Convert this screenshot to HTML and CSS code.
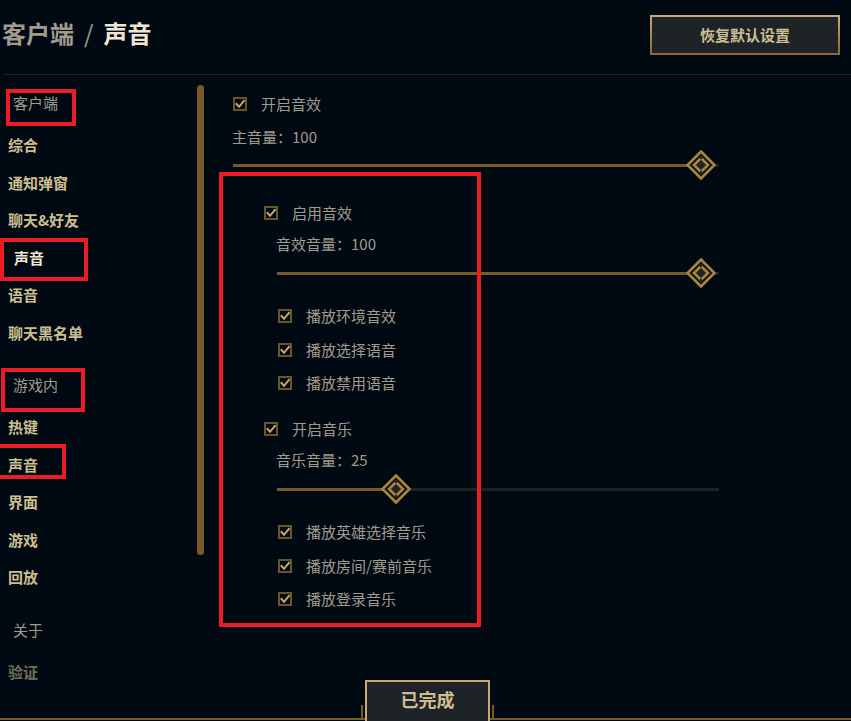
FILE: index.html
```html
<!DOCTYPE html>
<html lang="zh-CN">
<head>
<meta charset="utf-8">
<title>客户端 / 声音</title>
<link rel="stylesheet" href="styles.css">
</head>
<body>
<div class="page">
  <header class="topbar">
    <h1 class="title"><span class="crumb">客户端</span><span class="sep">/</span><span class="current">声音</span></h1>
    <button class="btn-reset">恢复默认设置</button>
  </header>

  <div class="main">
    <nav class="sidebar">
      <div class="nav-head first">客户端</div>
      <div class="nav-item">综合</div>
      <div class="nav-item">通知弹窗</div>
      <div class="nav-item">聊天&amp;好友</div>
      <div class="nav-item active">声音</div>
      <div class="nav-item">语音</div>
      <div class="nav-item">聊天黑名单</div>
      <div class="nav-head">游戏内</div>
      <div class="nav-item">热键</div>
      <div class="nav-item">声音</div>
      <div class="nav-item">界面</div>
      <div class="nav-item">游戏</div>
      <div class="nav-item">回放</div>
      <div class="nav-head">关于</div>
      <div class="nav-item faded">验证</div>
    </nav>
    <div class="scrollbar"></div>

    <section class="content">
      <label class="check">
        <svg viewBox="0 0 14 14"><rect x="1" y="1" width="12" height="12" class="cb-box"/><path d="M3.5 7 L6 9.8 L11 3.8" class="cb-tick"/></svg>
        <span>开启音效</span>
      </label>
      <div class="vol-label">主音量：100</div>
      <div class="slider slider-wide">
        <div class="track"><div class="fill" style="width:468px"></div></div>
        <svg class="thumb" style="left:453px" viewBox="0 0 30 30"><polygon points="15,1.5 28.5,15 15,28.5 1.5,15" class="th-out"/><polygon points="15,8 22,15 15,22 8,15" class="th-in"/><circle cx="15" cy="8" r="1.3" class="th-dot"/><circle cx="15" cy="22" r="1.3" class="th-dot"/></svg>
      </div>

      <div class="section">
        <label class="check">
          <svg viewBox="0 0 14 14"><rect x="1" y="1" width="12" height="12" class="cb-box"/><path d="M3.5 7 L6 9.8 L11 3.8" class="cb-tick"/></svg>
          <span>启用音效</span>
        </label>
        <div class="vol-label">音效音量：100</div>
        <div class="slider">
          <div class="track"><div class="fill" style="width:424px"></div></div>
          <svg class="thumb" style="left:409px" viewBox="0 0 30 30"><polygon points="15,1.5 28.5,15 15,28.5 1.5,15" class="th-out"/><polygon points="15,8 22,15 15,22 8,15" class="th-in"/><circle cx="15" cy="8" r="1.3" class="th-dot"/><circle cx="15" cy="22" r="1.3" class="th-dot"/></svg>
        </div>
        <div class="sub">
          <label class="check"><svg viewBox="0 0 14 14"><rect x="1" y="1" width="12" height="12" class="cb-box"/><path d="M3.5 7 L6 9.8 L11 3.8" class="cb-tick"/></svg><span>播放环境音效</span></label>
          <label class="check"><svg viewBox="0 0 14 14"><rect x="1" y="1" width="12" height="12" class="cb-box"/><path d="M3.5 7 L6 9.8 L11 3.8" class="cb-tick"/></svg><span>播放选择语音</span></label>
          <label class="check"><svg viewBox="0 0 14 14"><rect x="1" y="1" width="12" height="12" class="cb-box"/><path d="M3.5 7 L6 9.8 L11 3.8" class="cb-tick"/></svg><span>播放禁用语音</span></label>
        </div>
      </div>

      <div class="section">
        <label class="check">
          <svg viewBox="0 0 14 14"><rect x="1" y="1" width="12" height="12" class="cb-box"/><path d="M3.5 7 L6 9.8 L11 3.8" class="cb-tick"/></svg>
          <span>开启音乐</span>
        </label>
        <div class="vol-label">音乐音量：25</div>
        <div class="slider">
          <div class="track"><div class="fill" style="width:119px"></div></div>
          <svg class="thumb" style="left:104px" viewBox="0 0 30 30"><polygon points="15,1.5 28.5,15 15,28.5 1.5,15" class="th-out"/><polygon points="15,8 22,15 15,22 8,15" class="th-in"/><circle cx="15" cy="8" r="1.3" class="th-dot"/><circle cx="15" cy="22" r="1.3" class="th-dot"/></svg>
        </div>
        <div class="sub">
          <label class="check"><svg viewBox="0 0 14 14"><rect x="1" y="1" width="12" height="12" class="cb-box"/><path d="M3.5 7 L6 9.8 L11 3.8" class="cb-tick"/></svg><span>播放英雄选择音乐</span></label>
          <label class="check"><svg viewBox="0 0 14 14"><rect x="1" y="1" width="12" height="12" class="cb-box"/><path d="M3.5 7 L6 9.8 L11 3.8" class="cb-tick"/></svg><span>播放房间/赛前音乐</span></label>
          <label class="check"><svg viewBox="0 0 14 14"><rect x="1" y="1" width="12" height="12" class="cb-box"/><path d="M3.5 7 L6 9.8 L11 3.8" class="cb-tick"/></svg><span>播放登录音乐</span></label>
        </div>
      </div>
    </section>
  </div>

  <footer class="footer">
    <div class="done-frame"><button class="btn-done">已完成</button></div>
  </footer>

  <div class="annot annot-1"></div>
  <div class="annot annot-2"></div>
  <div class="annot annot-3"></div>
  <div class="annot annot-4"></div>
  <div class="annot annot-5"></div>
</div>
</body>
</html>
```

FILE: styles.css
```css
html, body {
  margin: 0;
  padding: 0;
  background: #010a13;
}

.page {
  position: relative;
  width: 851px;
  height: 721px;
  overflow: hidden;
  background: #010a13;
  font-family: "Noto Sans CJK SC", "Noto Sans", sans-serif;
  color: #a09b8c;
}

/* ---------- top bar ---------- */
.topbar {
  height: 74px;
  margin-left: 3px;
  border-bottom: 1px solid #1e2328;
  display: flex;
  justify-content: space-between;
  align-items: flex-start;
}

.title {
  margin: 21px 0 0 -1px;
  font-size: 24px;
  line-height: 24px;
  font-weight: 700;
  color: #a09b8c;
  display: flex;
}

.title .sep {
  font-weight: 400;
  margin: 0 10px 0 10px;
}

.title .current {
  color: #f0e6d2;
}

.btn-reset {
  margin: 15px 11px 0 0;
  width: 190px;
  height: 40px;
  box-sizing: border-box;
  border: 2px solid #c8aa6e;
  border-image: linear-gradient(#c8aa6e, #8a6a30) 1;
  background: #1e2328;
  color: #cdbe91;
  font-family: inherit;
  font-size: 15px;
  font-weight: 700;
  line-height: 20px;
  padding: 0;
}

/* ---------- main area ---------- */
.main {
  display: flex;
  height: 646px;
}

.sidebar {
  width: 197px;
  padding-top: 9px;
  box-sizing: border-box;
  flex: none;
}

.nav-head {
  height: 38px;
  line-height: 38px;
  margin: 15px 0 4px;
  padding-left: 13px;
  font-size: 15px;
  color: #a09b8c;
}

.nav-head.first {
  margin-top: 0;
}

.nav-item {
  height: 37.5px;
  line-height: 37.5px;
  padding-left: 8px;
  font-size: 15px;
  font-weight: 700;
  color: #cdbe91;
}

.nav-item.active {
  padding-left: 14px;
  color: #f0e6d2;
}

.nav-item.faded {
  opacity: 0.55;
}

.scrollbar {
  flex: none;
  width: 7px;
  height: 470px;
  margin-top: 10px;
  border-radius: 4px;
  background: #785a28;
}

.content {
  margin-left: 29px;
  padding-top: 19px;
  width: 486px;
}

/* ---------- controls ---------- */
.check {
  display: flex;
  align-items: center;
  gap: 14px;
  height: 20px;
  font-size: 15px;
  line-height: 20px;
  color: #a09b8c;
}

.check svg {
  width: 14px;
  height: 14px;
  flex: none;
}

.cb-box {
  fill: none;
  stroke: #6b5428;
  stroke-width: 2;
}

.cb-tick {
  fill: none;
  stroke: #c8aa6e;
  stroke-width: 2;
  stroke-linecap: square;
}

.vol-label {
  height: 20px;
  line-height: 20px;
  margin-top: 13px;
  margin-left: -1px;
  font-size: 15px;
  color: #a09b8c;
}

.slider {
  position: relative;
  height: 30px;
  margin-top: 3px;
  display: flex;
  align-items: center;
  width: 442px;
}

.slider-wide {
  width: 486px;
}

.track {
  flex: 1;
  height: 3px;
  background: #1e2328;
}

.fill {
  height: 100%;
  background: #785a28;
}

.thumb {
  position: absolute;
  top: 0;
  width: 30px;
  height: 30px;
}

.th-out {
  fill: #0b1219;
  stroke: #a8863e;
  stroke-width: 2.6;
}

.th-in {
  fill: #1e2328;
  stroke: #a8863e;
  stroke-width: 2.6;
}

.th-dot {
  fill: #1e2328;
}

.section {
  margin-left: 31px;
  margin-top: 23px;
}

.section + .section {
  margin-top: 26px;
}

.section .vol-label {
  margin-left: 12px;
  margin-top: 11px;
}

.section .slider {
  margin-left: 13px;
  margin-top: 4px;
}

.sub {
  margin-left: 14px;
  margin-top: 18px;
  display: flex;
  flex-direction: column;
  gap: 13.5px;
}

/* ---------- footer ---------- */
.footer {
  position: absolute;
  left: 0;
  right: 0;
  bottom: 0;
  height: 41px;
  padding-left: 4px;
  display: flex;
  justify-content: center;
  align-items: flex-end;
}

.footer::before {
  content: "";
  position: absolute;
  left: 0;
  right: 0;
  bottom: 1px;
  height: 2px;
  background: #785a28;
}

.done-frame {
  position: relative;
  width: 133px;
  height: 15px;
  margin-bottom: 1px;
  box-sizing: border-box;
  border-left: 2px solid #785a28;
  border-right: 2px solid #785a28;
  display: flex;
  justify-content: center;
  align-items: flex-start;
}

.btn-done {
  flex: none;
  margin-top: -25px;
  width: 125px;
  height: 44px;
  box-sizing: border-box;
  border: 2px solid #c8aa6e;
  background: #1e2328;
  color: #cdbe91;
  font-family: inherit;
  font-size: 18px;
  font-weight: 700;
  line-height: 24px;
  padding: 0 0 6px;
  display: block;
}

/* ---------- red annotation boxes ---------- */
.annot {
  position: absolute;
  box-sizing: border-box;
  border: 4px solid #ec1c24;
}

.annot-1 { left: 6px;   top: 89px;  width: 70px;  height: 37px; }
.annot-2 { left: 0;     top: 238px; width: 88px;  height: 43px; }
.annot-3 { left: 1px;   top: 368px; width: 84px;  height: 44px; }
.annot-4 { left: -4px;  top: 444px; width: 70px;  height: 35px; }
.annot-5 { left: 219px; top: 172px; width: 262px; height: 455px; }
```
